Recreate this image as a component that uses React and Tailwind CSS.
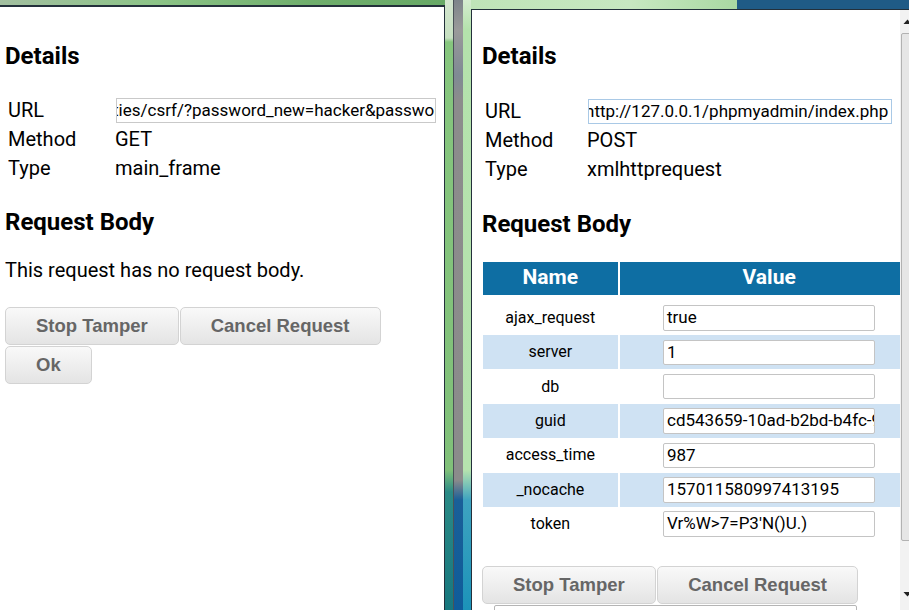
import React from "react";

const Btn = ({ children }) => (
  <button className="h-[38px] px-[30px] border border-[#d3d3d3] rounded-[5px] bg-linear-to-b from-[#f9f9f9] to-[#e4e4e4] text-[18.5px] font-bold text-[#666666] font-['Liberation_Sans',Arial,sans-serif] leading-none shrink-0">
    {children}
  </button>
);

const rows = [
  ["ajax_request", "true"],
  ["server", "1"],
  ["db", ""],
  ["guid", "cd543659-10ad-b2bd-b4fc-9a1e"],
  ["access_time", "987"],
  ["_nocache", "157011580997413195"],
  ["token", "Vr%W>7=P3'N()U.)"],
];

export default function App() {
  return (
    <div className="w-[909px] h-[610px] flex overflow-hidden font-['Roboto',sans-serif] text-black bg-white">
      {/* Left window */}
      <div className="w-[445px] h-[610px] shrink-0 flex flex-col">
        <div className="h-[5px] shrink-0 bg-[linear-gradient(to_right,#a2bfa0,#8cc487_35%,#6fae6c_70%,#67a966)]" />
        <div className="flex-1 min-h-0 overflow-hidden bg-white border-t-2 border-r border-[#23303b] pl-[5px]">
          <h2 className="mt-[34.5px] text-[24px] leading-[28px] font-bold">Details</h2>
          <div className="mt-[26.7px] pl-[3px] text-[20px] leading-[29px]">
            <div className="h-[29px] flex items-center">
              <div className="w-[107px] shrink-0">URL</div>
              <div className="ml-px h-[25px] w-[319.5px] shrink-0 border border-[#c9c9c9] overflow-hidden whitespace-nowrap flex items-center text-[17px]">
                <span className="ml-[-4px]">ties/csrf/?password_new=hacker&amp;password_conf=hacker&amp;Change=Change#</span>
              </div>
            </div>
            <div className="h-[29px] flex items-center">
              <div className="w-[107px] shrink-0">Method</div>
              <div>GET</div>
            </div>
            <div className="h-[29px] flex items-center">
              <div className="w-[107px] shrink-0">Type</div>
              <div>main_frame</div>
            </div>
          </div>
          <h2 className="mt-[24.8px] text-[24px] leading-[28px] font-bold">Request Body</h2>
          <p className="mt-[23px] text-[20px] leading-[23px]">This request has no request body.</p>
          <div className="mt-[25.3px] flex gap-px">
            <Btn>Stop Tamper</Btn>
            <Btn>Cancel Request</Btn>
          </div>
          <div className="mt-px flex">
            <Btn>Ok</Btn>
          </div>
        </div>
      </div>

      {/* Divider between screenshots */}
      <div className="w-[8px] shrink-0 bg-[linear-gradient(to_bottom,#d3e6cf_0px,#c6e0c1_38px,#86c67e_42px,#80c079_470px,#2a8a86_492px,#17777e_610px)]" />
      <div className="w-px shrink-0 bg-[#4a5258]" />
      <div className="w-[9px] shrink-0 bg-[linear-gradient(to_bottom,#7d848a_0px,#9a9a9a_30px,#7f8a94_75px,#8c8c8c_100px,#8b8b8b_480px,#1a5f98_500px,#0f5c9a_610px)]" />
      <div className="w-[8px] shrink-0 bg-[linear-gradient(to_bottom,#d5ecd0_0px,#b4e2ac_30px,#b6e3ae_470px,#3ea3c0_500px,#1c93b9_610px)]" />

      {/* Right window */}
      <div className="w-[447px] h-[610px] shrink-0 flex flex-col">
        <div className="h-[9px] shrink-0 flex">
          <div className="w-[266px] bg-[linear-gradient(to_right,#bfe4b8,#c7e8c1_60%,#a9d8a2)]" />
          <div className="flex-1 bg-[#1f5b86]" />
        </div>
        <div className="flex-1 min-h-0 overflow-hidden flex border-t border-l border-[#23303b] bg-white">
          <div className="w-[428px] shrink-0 overflow-hidden pl-[10px]">
            <h2 className="mt-[31.5px] text-[24px] leading-[28px] font-bold">Details</h2>
            <div className="mt-[27.5px] pl-[3px] text-[20px] leading-[29px]">
              <div className="h-[29px] flex items-center">
                <div className="w-[102px] shrink-0">URL</div>
                <div className="ml-[1.3px] h-[25px] w-[303.4px] shrink-0 border border-[#a9c9e6] overflow-hidden whitespace-nowrap flex items-center justify-end pr-[2.5px] text-[17px]">
                  <span className="shrink-0">http://127.0.0.1/phpmyadmin/index.php</span>
                </div>
              </div>
              <div className="h-[29px] flex items-center">
                <div className="w-[102px] shrink-0">Method</div>
                <div>POST</div>
              </div>
              <div className="h-[29px] flex items-center">
                <div className="w-[102px] shrink-0">Type</div>
                <div>xmlhttprequest</div>
              </div>
            </div>
            <h2 className="mt-[26px] text-[24px] leading-[28px] font-bold">Request Body</h2>
            <div className="mt-[23.7px] ml-px w-[436px]">
              <div className="grid grid-cols-[134.7px_299px] gap-x-[2px] h-[33px]">
                <div className="bg-[#0e6ea3] text-white font-bold text-[21px] flex items-center justify-center">Name</div>
                <div className="bg-[#0e6ea3] text-white font-bold text-[21px] flex items-center justify-center">Value</div>
              </div>
              <div className="mt-[6px]">
                {rows.map(([n, v], i) => (
                  <div key={n} className="grid grid-cols-[134.7px_299px] gap-x-[2px] h-[34.4px]">
                    <div className={`${i % 2 === 1 ? "bg-[#cfe2f3]" : "bg-white"} flex items-center justify-center text-[16px]`}>{n}</div>
                    <div className={`${i % 2 === 1 ? "bg-[#cfe2f3]" : "bg-white"} flex items-center justify-center`}>
                      <div className="h-[25.5px] w-[212.4px] bg-white border border-[#c4c4c4] rounded-[2px] overflow-hidden whitespace-nowrap flex items-center pl-[3px] text-[17px]">
                        {v}
                      </div>
                    </div>
                  </div>
                ))}
              </div>
            </div>
            <div className="mt-[24.6px] flex gap-[1.5px]">
              <Btn>Stop Tamper</Btn>
              <Btn>Cancel Request</Btn>
            </div>
            <div className="mt-px ml-[12px] w-[363px] h-[30px] border border-[#b5b5b5] rounded-t-[2px] bg-white" />
          </div>
          {/* scrollbar */}
          <div className="w-[17px] shrink-0 bg-[#f2f2f2] flex flex-col">
            <div className="h-[23px] shrink-0 flex items-center pl-[3px]">
              <svg width="9" height="6" viewBox="0 0 9 6"><path d="M4.5 0.5 L8.5 5 L0.5 5 Z" fill="#222" /></svg>
            </div>
            <div className="ml-px w-[15px] h-[508px] shrink-0 border border-[#b2b2b2] rounded-[2px] bg-[#e6e6e6]" />
            <div className="h-[60px] shrink-0 flex items-end pl-[3px] pb-[4px]">
              <svg width="9" height="6" viewBox="0 0 9 6"><path d="M0.5 1 L8.5 1 L4.5 5.5 Z" fill="#222" /></svg>
            </div>
          </div>
        </div>
      </div>
    </div>
  );
}
